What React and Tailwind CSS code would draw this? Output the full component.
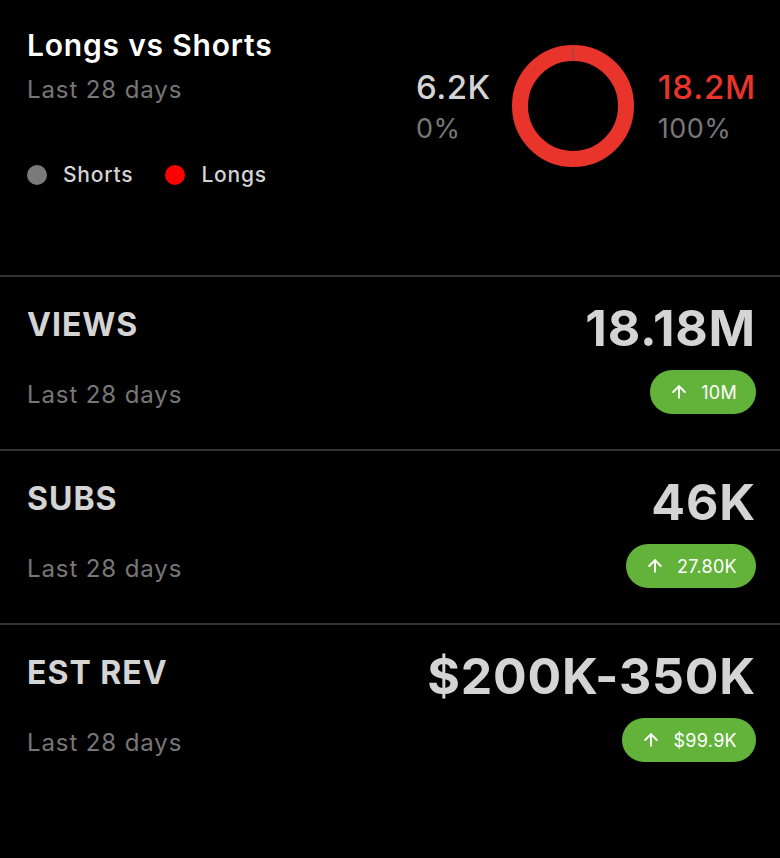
import React from 'react'
import { ArrowUp } from 'lucide-react'

const stats = [
  { label: 'VIEWS', value: '18.18M', change: '10M' },
  { label: 'SUBS', value: '46K', change: '27.80K' },
  { label: 'EST REV', value: '$200K-350K', change: '$99.9K' },
]

// simple donut, longs take the whole ring
const Donut = () => (
  <svg width="122" height="122" viewBox="0 0 122 122">
    <circle cx="61" cy="61" r="53" fill="none" stroke="#e8342a" strokeWidth="16" />
    <line x1="61" y1="0" x2="61" y2="16" stroke="#8a4a45" strokeWidth="1" />
  </svg>
)

const StatRow = ({ label, value, change }) => (
  <div className="border-t-2 border-[#333333] pl-[27px] pr-[24px] pt-[21px] h-[174px]">
    <div className="flex items-center justify-between h-[60px]">
      <p className="text-[32px] font-bold text-[#d4d4d4] leading-none tracking-[1px] -mt-[6px]">{label}</p>
      <p className="text-[50px] font-bold text-[#d4d4d4] leading-none tracking-[0.8px]">{value}</p>
    </div>
    <div className="flex items-center justify-between mt-[12px]">
      <p className="text-[24px] text-[#777777] tracking-[0.9px] mt-[5px]">Last 28 days</p>
      <span className="flex items-center gap-[12px] h-[44px] pl-[19px] pr-[19px] rounded-full bg-[#63b33b] text-white text-[18px] tracking-[0.3px]">
        <ArrowUp size={20} strokeWidth={2.3} />
        {change}
      </span>
    </div>
  </div>
)

export default function App() {
  return (
    <div className="bg-black min-h-[858px] w-[780px] font-['Inter',sans-serif]">
      <div className="flex justify-between pl-[27px] pr-[24px] pt-[26px] h-[275px]">
        <div>
          <h2 className="text-[30px] font-semibold text-white leading-[38px] tracking-[0.8px]">Longs vs Shorts</h2>
          <p className="text-[24px] text-[#777777] mt-[8px] tracking-[0.9px]">Last 28 days</p>
          <div className="flex items-center gap-[32px] mt-[51px] text-[21px] text-[#d4d4d4] font-medium tracking-[0.8px]">
            <span className="flex items-center gap-[16px]">
              <span className="w-[20px] h-[20px] rounded-full bg-[#7a7a7a]" />
              Shorts
            </span>
            <span className="flex items-center gap-[16px]">
              <span className="w-[20px] h-[20px] rounded-full bg-[#ff0000]" />
              Longs
            </span>
          </div>
        </div>
        <div className="flex items-center self-start mt-[19px]">
          <div className="leading-tight">
            <p className="text-[33px] font-medium text-[#d4d4d4] tracking-[0.5px]">6.2K</p>
            <p className="text-[27px] text-[#777777] mt-[4px] tracking-[0.5px]">0%</p>
          </div>
          <div className="ml-[21px] mr-[24px]">
            <Donut />
          </div>
          <div className="leading-tight">
            <p className="text-[33px] font-medium text-[#e8342a] tracking-[0.8px]">18.2M</p>
            <p className="text-[27px] text-[#777777] mt-[4px] tracking-[0.5px]">100%</p>
          </div>
        </div>
      </div>
      {stats.map((s) => (
        <StatRow key={s.label} {...s} />
      ))}
    </div>
  )
}
